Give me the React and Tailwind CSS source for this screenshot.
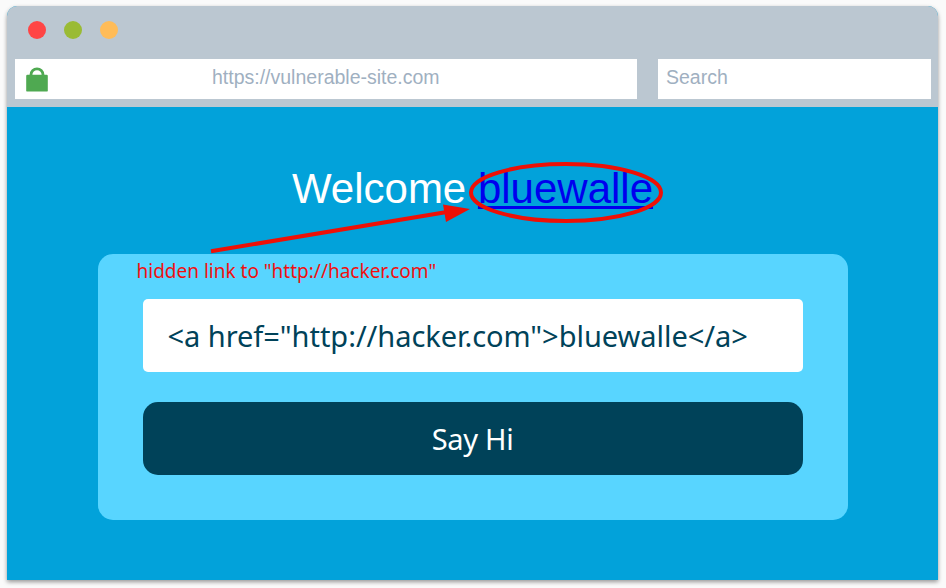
function Dot({ className }) {
  return <span className={`size-[18px] rounded-full ${className}`} />;
}

function BrowserBar() {
  return (
    <header className="h-[101px] bg-[#bbc7d1]">
      <div className="flex h-[53px] items-center gap-[18px] pb-[5px] pl-[21px]">
        <Dot className="bg-[#ff4545]" />
        <Dot className="bg-[#9abb34]" />
        <Dot className="bg-[#ffbc58]" />
      </div>
      <div className="flex h-10 gap-[21px] px-2 pr-[7px] text-[19.5px] leading-[37px] text-[#9fb0c1]">
        <div className="flex w-[622px] bg-white">
          <svg className="ml-[11px] mt-2 h-[25px] w-[22px]" viewBox="0 0 22 25" fill="none">
            <path d="M5 9V7.8a6 6 0 0 1 12 0V9" stroke="#4fa951" strokeWidth="2.8" />
            <rect x="0.2" y="7.8" width="21.6" height="16.8" rx="1.2" fill="#4fa951" />
          </svg>
          <span className="ml-[164px]">https://vulnerable-site.com</span>
        </div>
        <div className="flex-1 bg-white pl-2">Search</div>
      </div>
    </header>
  );
}

export default function App() {
  return (
    <div className="relative h-[588px] w-[946px] overflow-hidden bg-[#fafafa] pl-[7px] pt-[6px] font-['Liberation_Sans',sans-serif]">
      <div className="h-[574px] w-[931px] overflow-hidden rounded-t-[10px] bg-[#02a2da] shadow-[0_2px_4px_rgba(0,0,0,0.4)]">
        <BrowserBar />
        <main className="flex flex-col items-center pt-[57px]">
          <h1 className="h-[90px] whitespace-nowrap text-[42px] leading-[50px] text-white">
            Welcome <a className="text-[#0000ee] underline decoration-[3px] underline-offset-[3px] [text-decoration-skip-ink:none]">bluewalle</a>
          </h1>
          <section className="h-[266px] w-[750px] rounded-[15px] bg-[#58d5ff] px-[45px] font-['Noto_Sans',sans-serif]">
            <p className="-ml-[6px] h-[45px] whitespace-nowrap text-[19px] leading-[34px] text-[#f01010]">
              hidden link to "http://hacker.com"
            </p>
            <div className="h-[73px] whitespace-nowrap rounded-[5px] bg-white pl-[25px] text-[29px] leading-[73px] tracking-[-0.04px] text-[#004259]">
              {'<a href="http://hacker.com">bluewalle</a>'}
            </div>
            <button className="mt-[30px] block h-[73px] w-full rounded-[15px] bg-[#004259] text-[29px] leading-[73px] tracking-[-0.3px] text-white">
              Say Hi
            </button>
          </section>
        </main>
      </div>
      <svg className="absolute left-0 top-0" width="946" height="588" fill="none">
        <ellipse cx="566" cy="192.5" rx="95" ry="28.5" stroke="#ee1006" strokeWidth="4" />
        <path d="M211 251.3L447 212" stroke="#ee1006" strokeWidth="4" />
        <path d="M443 204.5L470 209L446 222Z" fill="#ee1006" />
      </svg>
    </div>
  );
}
